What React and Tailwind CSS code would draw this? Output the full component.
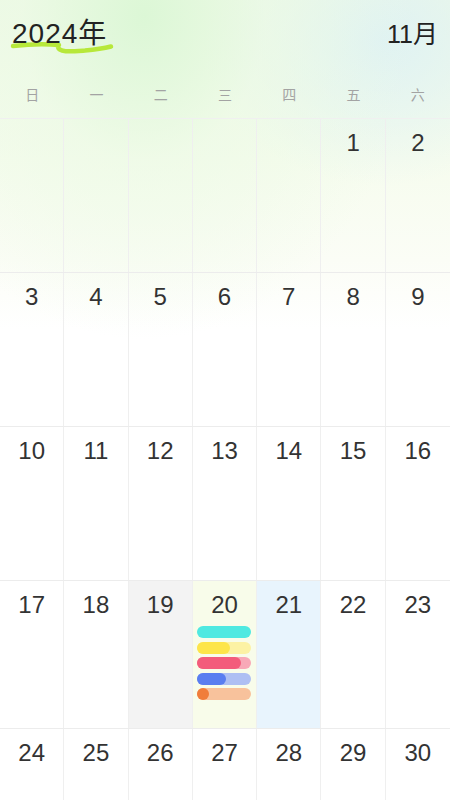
import React from "react";

const weekdays = ["日", "一", "二", "三", "四", "五", "六"];

const rows = [
  { h: "h-[154px]", days: [null, null, null, null, null, 1, 2] },
  { h: "h-[154px]", days: [3, 4, 5, 6, 7, 8, 9] },
  { h: "h-[154px]", days: [10, 11, 12, 13, 14, 15, 16] },
  { h: "h-[148px]", days: [17, 18, 19, 20, 21, 22, 23] },
  { h: "h-[80px]", days: [24, 25, 26, 27, 28, 29, 30] },
];

const cellBg = {
  19: "bg-[#f3f3f3]",
  20: "bg-[#f8fcea]",
  21: "bg-[#e8f4fd]",
};

function Bars() {
  return (
    <div className="mx-auto mt-[9px] flex w-[54px] flex-col gap-[3.5px]">
      <div className="h-[12px] rounded-full bg-[#4fe9e1]" />
      <div className="relative h-[12px] rounded-full bg-[#fcf2a4]">
        <div className="h-full w-[60%] rounded-full bg-[#fde54a]" />
      </div>
      <div className="relative h-[12px] rounded-full bg-[#f8a9b7]">
        <div className="h-full w-[81%] rounded-full bg-[#f35c7b]" />
      </div>
      <div className="relative h-[12px] rounded-full bg-[#aebff3]">
        <div className="h-full w-[53%] rounded-full bg-[#5a7ef0]" />
      </div>
      <div className="relative h-[12px] rounded-full bg-[#f8c29c]">
        <div className="h-full w-[12px] rounded-full bg-[#f07d3a]" />
      </div>
    </div>
  );
}

export default function App() {
  return (
    <div
      className="relative min-h-screen w-full overflow-hidden bg-white bg-[radial-gradient(ellipse_60%_40%_at_32%_2%,#dcf7d6_0%,rgba(235,250,228,0.6)_45%,transparent_100%),radial-gradient(ellipse_40%_18%_at_85%_5%,#dff2f3_0%,transparent_100%),linear-gradient(to_bottom,#eef9e6_0px,#f6fcee_160px,#fbfdf6_260px,#ffffff_330px)] text-[#333]"
      style={{ fontFamily: '"Liberation Sans", "Noto Sans CJK SC", sans-serif' }}
    >
      {/* header */}
      <div className="flex h-[72px] items-start justify-between px-[12px] pt-[17px]">
        <div className="relative">
          <svg
            className="absolute left-[-12px] top-[-1px]"
            width="130"
            height="60"
            viewBox="0 0 130 60"
          >
            <path
              d="M13 30 C 26 28.5, 43 27.5, 59 29 M 58 31 C 59 36.5, 70 35.5, 85 34.5 C 96 33.5, 105 32, 111 30.5"
              fill="none"
              stroke="#b7e83a"
              strokeWidth="4.5"
              strokeLinecap="round"
            />
          </svg>
          <span className="relative text-[28px] leading-[34px] tracking-[1px] text-[#222]">
            2024年
          </span>
        </div>
        <span className="text-[25px] leading-[34px] text-[#222]">11月</span>
      </div>

      {/* weekdays */}
      <div className="grid h-[46px] grid-cols-7 items-center">
        {weekdays.map((w) => (
          <div key={w} className="text-center text-[14px] text-[#a3a3a3]">
            {w}
          </div>
        ))}
      </div>

      {/* grid */}
      <div className="border-t border-[#f0f0f0]">
        {rows.map((row, ri) => (
          <div key={ri} className={`grid grid-cols-7 border-b border-[#ececec] ${row.h}`}>
            {row.days.map((d, ci) => (
              <div
                key={ci}
                className={`${ci < 6 ? "border-r border-[#efefef]" : ""} ${
                  d && cellBg[d] ? cellBg[d] : ""
                } pt-[12px] text-center`}
              >
                {d && <div className="text-[24px] leading-[24px] text-[#333]">{d}</div>}
                {d === 20 && <Bars />}
              </div>
            ))}
          </div>
        ))}
      </div>
    </div>
  );
}
